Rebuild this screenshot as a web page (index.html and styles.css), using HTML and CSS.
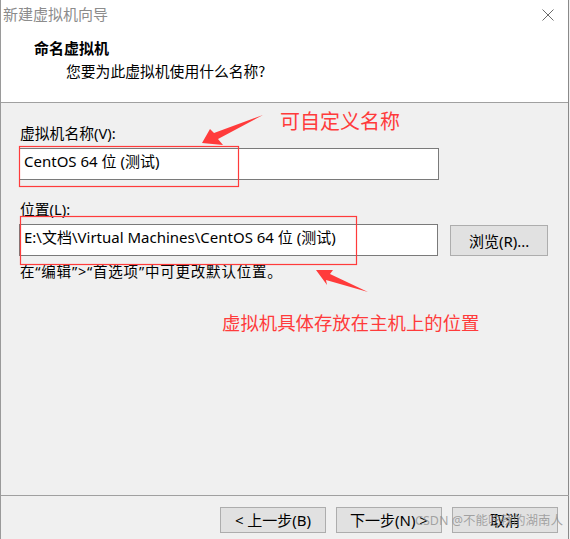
FILE: index.html
```html
<!DOCTYPE html>
<html lang="zh-CN">
<head>
<meta charset="utf-8">
<title>新建虚拟机向导</title>
<link rel="stylesheet" href="styles.css">
</head>
<body>
<div class="window">
  <div class="titlebar">
    <span class="title">新建虚拟机向导</span>
    <svg class="close" width="12" height="12" viewBox="0 0 12 12"><path d="M0.5 0.5 L11.5 11.5 M11.5 0.5 L0.5 11.5" stroke="#6a6a6a" stroke-width="1" fill="none"/></svg>
  </div>
  <div class="header">
    <div class="h-title">命名虚拟机</div>
    <div class="h-sub">您要为此虚拟机使用什么名称?</div>
  </div>
  <div class="content">
    <div class="label l1">虚拟机名称(V):</div>
    <div class="row">
      <div class="input">CentOS 64 位 (测试)</div>
    </div>
    <div class="label l2">位置(L):</div>
    <div class="row">
      <div class="input">E:\文档\Virtual Machines\CentOS 64 位 (测试)</div>
      <div class="btn browse">浏览(R)...</div>
    </div>
    <div class="hint">在“编辑”&gt;“首选项”中可更改默认位置。</div>
  </div>
  <div class="footer">
    <div class="btn">&lt; 上一步(B)</div>
    <div class="btn">下一步(N) &gt;</div>
    <div class="btn">取消</div>
  </div>

  <svg class="annot" width="570" height="539" viewBox="0 0 570 539">
    <rect x="19.5" y="146.5" width="219" height="40" fill="none" stroke="#ff3b3b" stroke-width="1.2"/>
    <rect x="20.5" y="216.5" width="336" height="48" fill="none" stroke="#ff3b3b" stroke-width="1.2"/>
    <polygon points="202,143 210,129 214,133 263,115 218,139 223,145" fill="#ff3b3b"/>
    <polygon points="316,270 333,270 330,274 368,292 326,280 327,285" fill="#ff3b3b"/>
  </svg>
  <div class="note n1">可自定义名称</div>
  <div class="note n2">虚拟机具体存放在主机上的位置</div>
  <div class="watermark">CSDN @不能吃辣的湖南人</div>
</div>
</body>
</html>
```
FILE: styles.css
```css
* { box-sizing: border-box; }
html, body { margin: 0; padding: 0; }
body {
  width: 570px;
  height: 539px;
  overflow: hidden;
  background: #f0f0f0;
  font-family: "Noto Sans", "Noto Sans CJK SC", sans-serif;
  font-size: 14px;
  color: #000;
}
.window {
  position: relative;
  width: 569px;
  height: 539px;
  border-right: 1px solid #8a8a8a;
  border-left: 1px solid #9a9a9a;
}
.titlebar {
  height: 29px;
  background: #fff;
  display: flex;
  align-items: center;
  justify-content: space-between;
  padding: 0 14px 1px 2px;
}
.title {
  font-family: "Noto Sans CJK SC", sans-serif;
  font-size: 15px;
  color: #8c8c8c;
  line-height: 20px;
}
.close { display: block; margin-top: 1px; }
.header {
  height: 74px;
  background: #fff;
  border-bottom: 1px solid #a0a0a0;
  padding-top: 8px;
}
.h-title {
  font-family: "Noto Sans CJK SC", sans-serif;
  font-weight: bold;
  font-size: 15px;
  line-height: 22px;
  padding-left: 33px;
}
.h-sub {
  font-family: "Noto Sans CJK SC", sans-serif;
  font-size: 14.8px;
  line-height: 22px;
  padding-left: 65px;
  margin-top: 1px;
}
.content {
  height: 392px;
  padding: 0 20px 0 18px;
}
.label {
  font-size: 14.8px;
  line-height: 20px;
  padding-left: 1px;
}
.l1 { padding-top: 20px; margin-bottom: 5px; }
.l2 { margin-top: 19px; margin-bottom: 5px; }
.row {
  display: flex;
  align-items: flex-start;
  gap: 12px;
}
.input {
  width: 420px;
  height: 32px;
  background: #fff;
  border: 1px solid #7a7a7a;
  padding: 0 4px;
  font-size: 15px;
  line-height: 24px;
  white-space: nowrap;
}
.btn {
  width: 106px;
  height: 26px;
  background: #e1e1e1;
  border: 1px solid #adadad;
  display: flex;
  align-items: center;
  justify-content: center;
  font-size: 15px;
  line-height: 20px;
}
.browse {
  width: 98px;
  height: 31px;
  margin-top: 1px;
}
.hint {
  font-size: 14.5px;
  letter-spacing: 0.8px;
  line-height: 20px;
  margin-top: 5px;
  padding-left: 1px;
}
.footer {
  border-top: 1px solid #a0a0a0;
  display: flex;
  justify-content: flex-end;
  gap: 10px;
  padding: 11px 11px 0 0;
  margin-right: -1px;
}
.annot {
  position: absolute;
  left: -1px;
  top: 0;
  pointer-events: none;
}
.note {
  position: absolute;
  font-family: "Noto Sans CJK SC", sans-serif;
  color: #ff3b3b;
  white-space: nowrap;
}
.n1 { left: 279px; top: 107px; font-size: 20px; line-height: 28px; }
.n2 { left: 221px; top: 309px; font-size: 18.4px; line-height: 26px; }
.watermark {
  position: absolute;
  left: 414px;
  top: 512px;
  font-size: 12.5px;
  line-height: 18px;
  color: rgba(140, 140, 140, 0.75);
  white-space: nowrap;
}
```
